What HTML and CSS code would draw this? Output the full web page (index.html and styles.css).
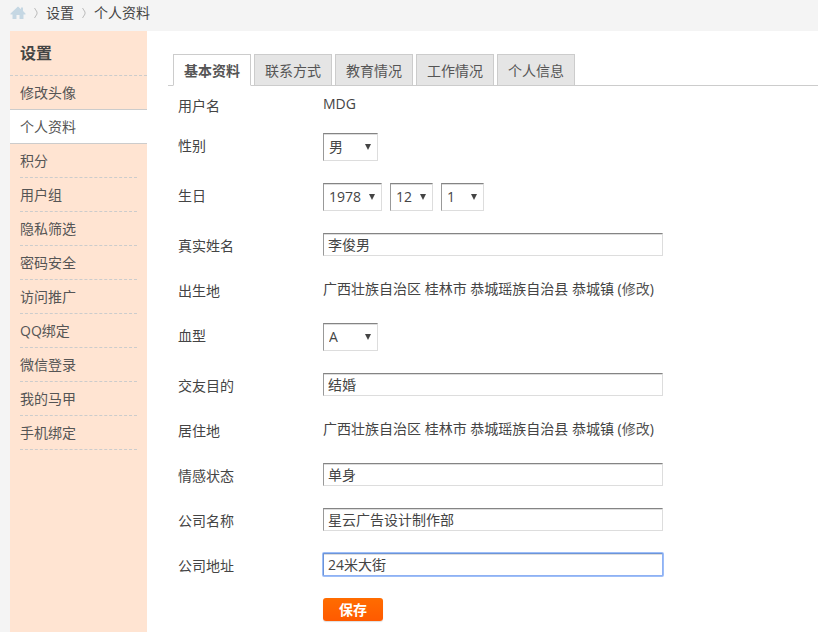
FILE: index.html
```html
<!DOCTYPE html>
<html lang="zh-CN">
<head>
    <meta charset="UTF-8">
    <meta name="viewport" content="width=device-width, initial-scale=1.0">
    <title>个人资料 - 设置</title>
    <link rel="stylesheet" href="styles.css">
</head>
<body>
    <nav class="crumbs">
        <a href="#" class="home" aria-label="首页">
            <svg width="16" height="14" viewBox="0 0 16 14">
                <path d="M8 .5L11 3.2V1.5H13V5L15.5 7.5V8.5H13.5V13H9.5V9H6.5V13H2.5V8.5H.5V7.5Z" fill="#c5d7e3"/>
            </svg>
        </a>
        <svg class="arrow" width="4" height="12" viewBox="0 0 4 12"><path d="M.5 1L3 5V7L.5 11" fill="none" stroke="#bbb"/></svg>
        <a href="#">设置</a>
        <svg class="arrow" width="4" height="12" viewBox="0 0 4 12"><path d="M.5 1L3 5V7L.5 11" fill="none" stroke="#bbb"/></svg>
        <a href="#">个人资料</a>
    </nav>

    <div class="wrap">
        <aside class="side">
            <h2>设置</h2>
            <ul>
                <li class="before"><a href="#">修改头像</a></li>
                <li class="active"><a href="#">个人资料</a></li>
                <li><a href="#">积分</a></li>
                <li><a href="#">用户组</a></li>
                <li><a href="#">隐私筛选</a></li>
                <li><a href="#">密码安全</a></li>
                <li><a href="#">访问推广</a></li>
                <li><a href="#">QQ绑定</a></li>
                <li><a href="#">微信登录</a></li>
                <li><a href="#">我的马甲</a></li>
                <li><a href="#">手机绑定</a></li>
            </ul>
        </aside>

        <main class="main">
            <ul class="tabs">
                <li class="active"><a href="#">基本资料</a></li>
                <li><a href="#">联系方式</a></li>
                <li><a href="#">教育情况</a></li>
                <li><a href="#">工作情况</a></li>
                <li><a href="#">个人信息</a></li>
            </ul>

            <form class="profile">
                <div class="row first">
                    <span class="label">用户名</span>
                    <div class="field">MDG</div>
                </div>
                <div class="row">
                    <label class="label" for="gender">性别</label>
                    <div class="field">
                        <span class="select"><select id="gender" class="w-mid"><option>保密</option><option selected>男</option><option>女</option></select></span>
                    </div>
                </div>
                <div class="row">
                    <label class="label" for="birthyear">生日</label>
                    <div class="field">
                        <span class="select"><select id="birthyear" class="w-year"><option>1978</option></select></span>
                        <span class="select"><select class="w-day" aria-label="月"><option>12</option></select></span>
                        <span class="select"><select class="w-day" aria-label="日"><option>1</option></select></span>
                    </div>
                </div>
                <div class="row">
                    <label class="label" for="realname">真实姓名</label>
                    <div class="field"><input type="text" id="realname" value="李俊男"></div>
                </div>
                <div class="row">
                    <span class="label">出生地</span>
                    <div class="field"><p>广西壮族自治区 桂林市 恭城瑶族自治县 恭城镇 (<a href="#">修改</a>)</p></div>
                </div>
                <div class="row">
                    <label class="label" for="blood">血型</label>
                    <div class="field">
                        <span class="select"><select id="blood" class="w-mid"><option>A</option><option>B</option><option>AB</option><option>O</option></select></span>
                    </div>
                </div>
                <div class="row">
                    <label class="label" for="lookingfor">交友目的</label>
                    <div class="field"><input type="text" id="lookingfor" value="结婚"></div>
                </div>
                <div class="row">
                    <span class="label">居住地</span>
                    <div class="field"><p>广西壮族自治区 桂林市 恭城瑶族自治县 恭城镇 (<a href="#">修改</a>)</p></div>
                </div>
                <div class="row">
                    <label class="label" for="affective">情感状态</label>
                    <div class="field"><input type="text" id="affective" value="单身"></div>
                </div>
                <div class="row">
                    <label class="label" for="company">公司名称</label>
                    <div class="field"><input type="text" id="company" value="星云广告设计制作部"></div>
                </div>
                <div class="row">
                    <label class="label" for="address">公司地址</label>
                    <div class="field"><input type="text" id="address" class="focus" value="24米大街"></div>
                </div>
                <div class="row last">
                    <span class="label"></span>
                    <div class="field"><button type="submit">保存</button></div>
                </div>
            </form>
        </main>
    </div>
</body>
</html>
```

FILE: styles.css
```css
* {
    box-sizing: border-box;
}

body {
    margin: 0;
    min-height: 100vh;
    display: flex;
    flex-direction: column;
    background: #f4f4f4;
    color: #444;
    font: 14px/22px "Open Sans", "Noto Sans CJK SC", sans-serif;
}

a {
    color: inherit;
    text-decoration: none;
}

ul, h2, p {
    margin: 0;
    padding: 0;
    list-style: none;
}

/* breadcrumb */
.crumbs {
    display: flex;
    align-items: center;
    height: 31px;
    padding: 0 10px 5px;
}

.crumbs svg {
    display: block;
}

.crumbs .arrow {
    margin: 0 8px;
}

.wrap {
    flex: 1;
    display: flex;
    margin-left: 10px;
    background: #fff;
}

/* sidebar */
.side {
    flex: none;
    width: 137px;
    background: #ffe4d2;
    color: #555;
}

.side h2 {
    height: 45px;
    padding-left: 10px;
    border-bottom: 1px dashed #ccc;
    color: #444;
    font-size: 16px;
    line-height: 44px;
}

.side li {
    margin: 0 10px;
    border-bottom: 1px dashed #ccc;
}

.side li a {
    display: block;
    line-height: 33px;
}

.side .before,
.side .active {
    margin: 0;
    padding-left: 10px;
    border-bottom: 1px solid #ccc;
}

.side .active {
    background: #fff;
}

/* main */
.main {
    flex: 1;
    padding-top: 23px;
}

.tabs {
    display: flex;
    gap: 3px;
    margin-left: 21px;
    padding-left: 5px;
    border-bottom: 1px solid #ccc;
}

.tabs li {
    height: 32px;
    margin-bottom: -1px;
    padding: 0 10px;
    border: 1px solid #ccc;
    background: #e5e5e5;
    color: #555;
    line-height: 32px;
}

.tabs .active {
    border-bottom-color: #fff;
    background: #fff;
    font-weight: bold;
}

.profile {
    padding: 7px 31px 0;
}

.row {
    display: flex;
    padding-bottom: 22px;
}

.row.first {
    padding-bottom: 17px;
}

.row.last {
    padding-bottom: 10px;
}

.label {
    flex: none;
    width: 145px;
    padding-top: 3px;
    line-height: 20px;
}

.field {
    flex: 1;
    display: flex;
    gap: 8px;
}

.field p a {
    color: #555;
}

input,
select {
    border: 1px solid #ddd;
    border-top-color: #848484;
    border-left-color: #999;
    border-radius: 0;
    background: #fff;
    box-shadow: inset 0 1px 0 #ddd;
    color: #444;
    font: inherit;
    outline: none;
}

input {
    width: 100%;
    max-width: 340px;
    height: 23px;
    padding: 0 4px 2px;
}

input:focus,
input.focus {
    border-color: #6c94d8 #8fb1f3 #8fb1f3 #6c94d8;
    border-radius: 1px;
    box-shadow: inset 0 1px 0 #ddd, 0 0 0 1px #9dbef8;
}

.select {
    position: relative;
}

.select::after {
    content: "";
    position: absolute;
    top: 11px;
    right: 7px;
    border: 3px solid transparent;
    border-top: 6px solid #444;
    border-bottom: 0;
    pointer-events: none;
}

select {
    display: block;
    height: 28px;
    padding: 0 5px;
    appearance: none;
}

.w-mid {
    width: 55px;
}

.w-year {
    width: 59px;
}

.w-day {
    width: 43px;
}

button {
    width: 60px;
    height: 23px;
    padding: 0;
    border: 0;
    border-radius: 3px;
    background: linear-gradient(#ff6c00, #ff5a00);
    box-shadow: 0 1px 1px #ddd;
    color: #fff;
    font: bold 14px/23px "Open Sans", "Noto Sans CJK SC", sans-serif;
    cursor: pointer;
}
```
